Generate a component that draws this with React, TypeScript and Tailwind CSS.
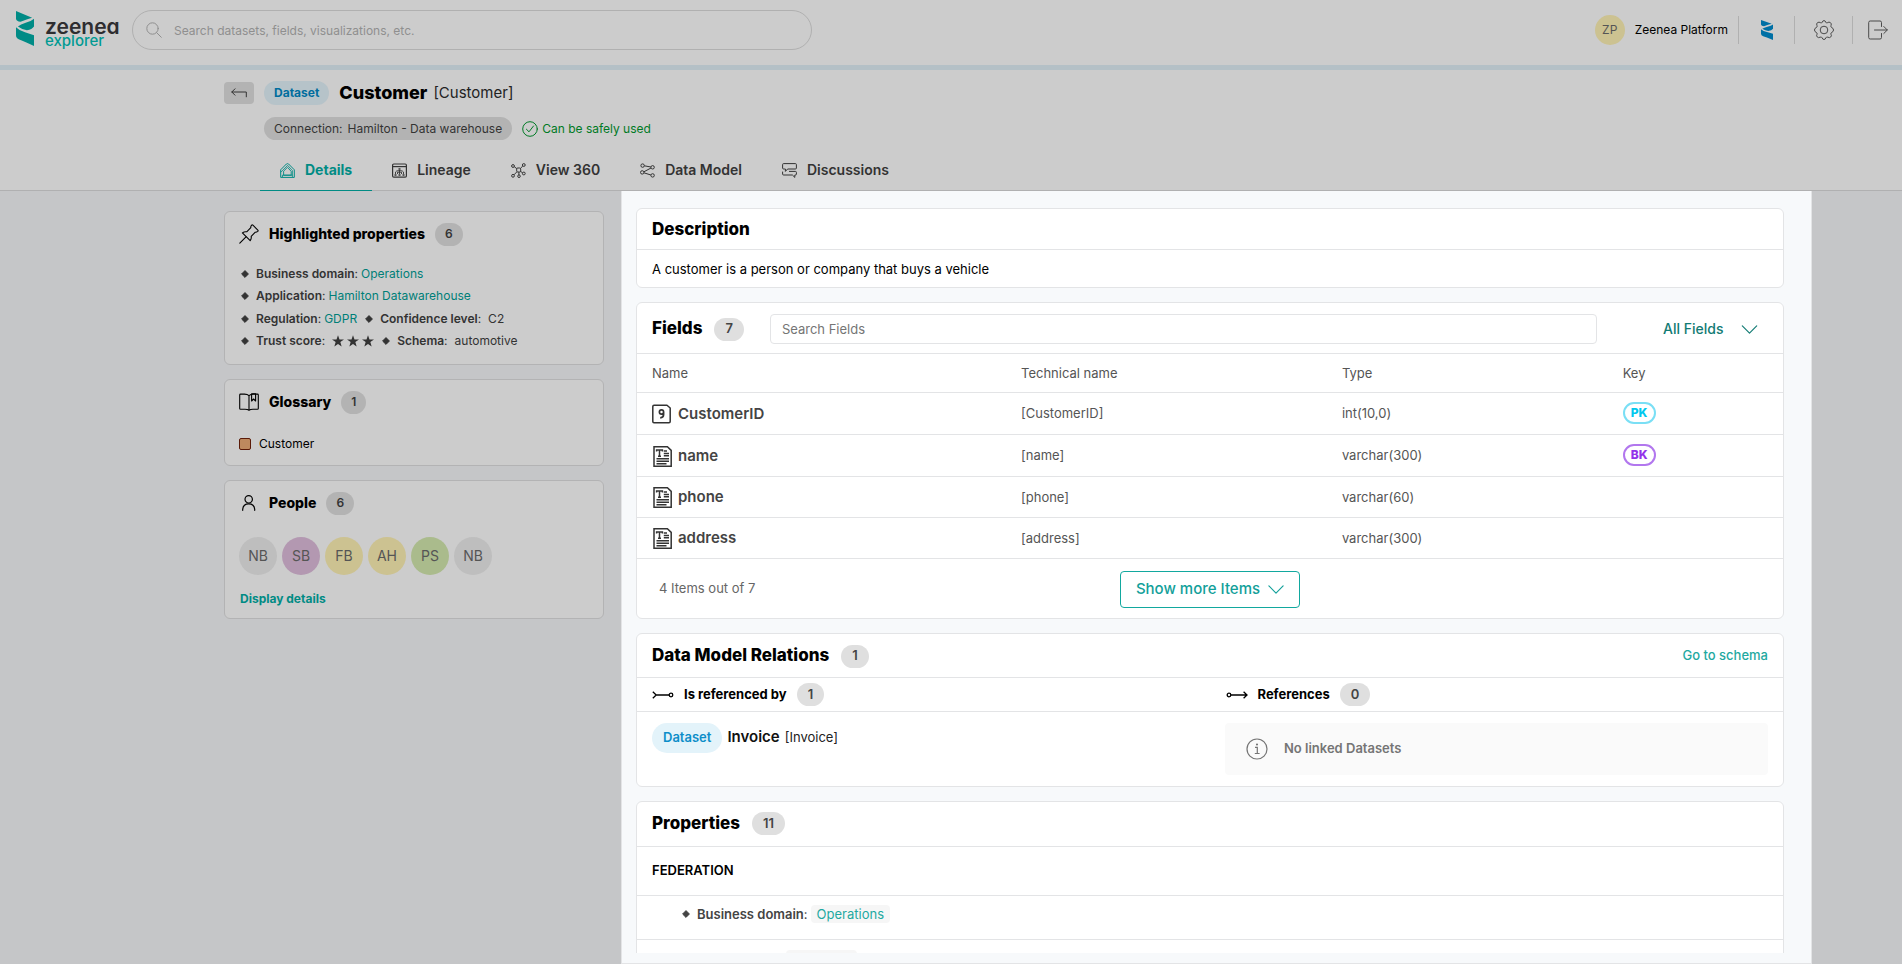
import type { ReactNode } from "react";

type Tone = "dim" | "light";

const tabs = [
    { label: "Details", icon: <HomeIcon />, active: true },
    { label: "Lineage", icon: <LineageIcon /> },
    { label: "View 360", icon: <GraphIcon /> },
    { label: "Data Model", icon: <ModelIcon /> },
    { label: "Discussions", icon: <DiscussionIcon /> },
];

const people = [
    { initials: "NB", color: "bg-[#bebebe]" },
    { initials: "SB", color: "bg-[#b398b1]" },
    { initials: "FB", color: "bg-[#ccc291]" },
    { initials: "AH", color: "bg-[#ccc291]" },
    { initials: "PS", color: "bg-[#aabb8c]" },
    { initials: "NB", color: "bg-[#bebebe]" },
];

const fields = [
    { name: "CustomerID", type: "int(10,0)", key: "PK", icon: <NumberIcon /> },
    { name: "name", type: "varchar(300)", key: "BK", icon: <TextIcon /> },
    { name: "phone", type: "varchar(60)", key: "", icon: <TextIcon /> },
    { name: "address", type: "varchar(300)", key: "", icon: <TextIcon /> },
];

function ZeeneaMark({ className }: { className: string }) {
    return (
        <svg viewBox="0 0 56 104" preserveAspectRatio="none" fill="currentColor" className={className} aria-hidden="true">
            <path d="M0 0 L50 20 Q34 25 14 32 Q1 31 0 23 Z" />
            <path d="M56 23 V46 Q50 55 34 57 Q20 56 6 46 Q14 40 30 35 Q48 30 56 23 Z" />
            <path d="M0 48 Q10 58 28 63 L56 72 V104 Q28 92 10 85 Q0 81 0 72 Z" />
        </svg>
    );
}

function SearchIcon() {
    return (
        <svg viewBox="0 0 16 16" fill="none" stroke="currentColor" strokeLinecap="round" className="size-4" aria-hidden="true">
            <circle cx="6.5" cy="6.5" r="5.7" />
            <path d="M10.6 10.6 L15.3 15.3" />
        </svg>
    );
}

function GearIcon() {
    return (
        <svg viewBox="0 0 20 20" fill="none" stroke="currentColor" strokeLinejoin="round" className="size-5" aria-hidden="true">
            <circle cx="10" cy="10" r="3.8" />
            <path d="M8.3 2.2 Q8.6 .6 10 .6 Q11.4 .6 11.7 2.2 Q12.1 3.2 13.2 2.8 Q15.1 1.5 16.4 2.6 Q17.9 3.7 17 5.6 Q16.4 7.1 17.8 7.6 Q19.5 8.2 19.5 10 Q19.5 11.7 17.8 12.4 Q16.4 12.9 17 14.3 Q17.9 16 16.8 16.9 Q15.6 18.2 13.9 17.2 Q12.4 16.5 11.9 17.8 Q11.4 19.5 10 19.5 Q8.6 19.5 8.1 17.8 Q7.6 16.5 6.1 17.2 Q4.4 18.2 3.2 16.9 Q2.1 16 3 14.3 Q3.6 12.9 2.2 12.4 Q.5 11.7 .5 10 Q.5 8.2 2.2 7.6 Q3.6 7.1 3 5.6 Q2.1 3.7 3.4 2.7 Q4.9 1.5 6.8 2.8 Q7.9 3.2 8.3 2.2 Z" />
        </svg>
    );
}

function LogoutIcon() {
    return (
        <svg viewBox="0 0 20 20" fill="none" stroke="currentColor" strokeLinejoin="round" strokeLinecap="round" className="size-5" aria-hidden="true">
            <path d="M13.5 6.5 V2.5 Q13.5 1 12 1 H2.2 Q.7 1 .7 2.5 V17.5 Q.7 19 2.2 19 H12 Q13.5 19 13.5 17.5 V13.5" />
            <path d="M6.5 10 H19.3 M15.8 6.5 L19.3 10 L15.8 13.5" />
        </svg>
    );
}

function BackIcon() {
    return (
        <svg viewBox="0 0 16 10" fill="none" stroke="currentColor" strokeLinejoin="round" strokeLinecap="round" className="h-2.5 w-4" aria-hidden="true">
            <path d="M4 .8 L.8 4 L4 7.2 M.8 4 H15.3 V8.8" />
        </svg>
    );
}

function CheckIcon() {
    return (
        <svg viewBox="0 0 16 16" fill="none" stroke="currentColor" strokeLinecap="round" className="size-4" aria-hidden="true">
            <circle cx="8" cy="8" r="7.3" />
            <path d="M4.4 8.2 L7 10.8 L11.5 5" />
        </svg>
    );
}

function HomeIcon() {
    return (
        <svg viewBox="0 0 15 15" fill="none" stroke="currentColor" strokeLinejoin="round" className="size-[15px]" aria-hidden="true">
            <path d="M.7 14.4 V6.8 L6.4 1 Q7.5 .2 8.6 1 L14.3 6.8 V14.4 Z" />
            <path d="M.9 9.2 L7.6 2.4 L12.4 7.6 V14" strokeWidth=".8" />
            <path d="M3.6 12.2 V8.2 L7.5 4.3 L11.2 8.4 V12.2 Z M2.4 14 V12.2 H12.4" strokeWidth=".9" />
        </svg>
    );
}

function LineageIcon() {
    return (
        <svg viewBox="0 0 15 15" fill="none" stroke="currentColor" className="size-[15px]" aria-hidden="true">
            <rect x=".6" y="1" width="13.8" height="13.2" rx="1.2" strokeWidth="1.2" />
            <path d="M.6 3.6 H14.4" strokeWidth="1.2" />
            <path d="M7.5 7 V11 M3.5 11 V9 Q4 7.6 7.5 7.6 Q11 7.6 11.5 9 V11 M5.5 11 V9.2 H9.5 V11" strokeWidth=".9" />
            <path d="M2.5 12 h2 M6.5 12 h2 M10.5 12 h2 M6.5 6 h2" strokeWidth="1.5" />
        </svg>
    );
}

function GraphIcon() {
    return (
        <svg viewBox="0 0 15 15" fill="none" stroke="currentColor" className="size-[15px]" aria-hidden="true">
            <rect x="5.7" y="5" width="4" height="4" rx="1" />
            <circle cx="2" cy="3" r="1.4" />
            <circle cx="12.8" cy="2" r="1.4" />
            <circle cx="2" cy="12.8" r="1.4" />
            <circle cx="8" cy="13.2" r="1.3" />
            <circle cx="12.8" cy="10.5" r="1.4" />
            <path d="M3.3 3.8 L5.8 5.6 M9.6 5.2 L11.8 3 M5.9 8.8 L3 11.8 M7.9 9 V12 M9.6 8.4 L11.6 9.8" />
        </svg>
    );
}

function ModelIcon() {
    return (
        <svg viewBox="0 0 15 15" fill="none" stroke="currentColor" className="size-[15px]" aria-hidden="true">
            <circle cx="2.6" cy="2.6" r="1.7" />
            <circle cx="12.6" cy="4.3" r="1.7" />
            <circle cx="2.2" cy="9.4" r="1.7" />
            <circle cx="12.6" cy="12.4" r="1.7" />
            <path d="M4.3 2.8 L10.9 4 M11 5 L3.9 8.8 M3.9 9.8 L10.9 12" />
        </svg>
    );
}

function DiscussionIcon() {
    return (
        <svg viewBox="0 0 15 15" fill="none" stroke="currentColor" strokeLinejoin="round" className="size-[15px]" aria-hidden="true">
            <path d="M2.4 6 H1.6 Q.6 6 .6 5 V1.6 Q.6 .6 1.6 .6 H13.4 Q14.4 .6 14.4 1.6 V5 Q14.4 6 13.4 6 H5.6 L3.4 8.4 V6 H2.4" />
            <path d="M7 8.4 H13.4 Q14.4 8.4 14.4 9.4 V11 Q14.4 12 13.4 12 H12.8 V14.4 L10.4 12 H1.6 Q.6 12 .6 11 V8.6" />
        </svg>
    );
}

function PinIcon() {
    return (
        <svg viewBox="0 0 20 20" fill="none" stroke="currentColor" strokeWidth="1.1" strokeLinejoin="round" strokeLinecap="round" className="size-5" aria-hidden="true">
            <path d="M12.6 1.2 Q13.2 .5 13.9 1.2 L18.8 6.1 Q19.5 6.8 18.8 7.4 Q17.8 8.2 16.3 8.2 L12.2 12.4 Q12.6 14.8 11.2 16.7 L3.4 8.9 Q5.4 7.4 7.7 7.8 L11.8 3.7 Q11.6 2.3 12.6 1.2 Z" />
            <path d="M7 12.8 L.8 19.2" />
        </svg>
    );
}

function BookIcon() {
    return (
        <svg viewBox="0 0 20 18" fill="none" stroke="currentColor" strokeWidth="1.1" strokeLinejoin="round" className="h-[18px] w-5" aria-hidden="true">
            <path d="M10 2.6 Q8.4 1.1 5.5 1.1 H1.6 Q.7 1.1 .7 2 V15.4 Q.7 16.2 1.6 16.2 H6 Q8.6 16.2 10 17.2 Q11.4 16.2 14 16.2 H18.4 Q19.3 16.2 19.3 15.4 V2 Q19.3 1.1 18.4 1.1 H14.5 Q11.6 1.1 10 2.6 Z M10 2.6 V17.2" />
            <path d="M12.6 .8 V8 L14.6 6 L16.6 8 V.8 Z" />
        </svg>
    );
}

function PersonIcon() {
    return (
        <svg viewBox="0 0 20 20" fill="none" stroke="currentColor" strokeWidth="1.2" strokeLinecap="round" className="size-5" aria-hidden="true">
            <circle cx="9.7" cy="6.3" r="3.7" />
            <path d="M3.7 17.3 V16.2 Q4.2 10.9 9.7 10.9 Q15.2 10.9 15.7 16.2 V17.3" />
        </svg>
    );
}

function StarIcon() {
    return (
        <svg viewBox="0 0 24 24" fill="currentColor" className="size-3" aria-hidden="true">
            <path d="M12 .5 L15 9 H24 L16.7 14.2 L19.3 23.2 L12 17.8 L4.7 23.2 L7.3 14.2 L0 9 H9 Z" />
        </svg>
    );
}

function NumberIcon() {
    return (
        <svg viewBox="0 0 20 20" fill="none" stroke="currentColor" strokeLinejoin="round" className="size-5 text-[#333]" aria-hidden="true">
            <path d="M2 1.2 H15 L18.2 4 V17.6 Q18.2 18.8 17 18.8 H2 Q.8 18.8 .8 17.6 V2.4 Q.8 1.2 2 1.2 Z" strokeWidth="1.5" />
            <path d="M11.6 8 A2.1 2.1 0 1 1 7.4 8 A2.1 2.1 0 1 1 11.6 8 V10.5 Q11.6 13.6 8.2 13.8" strokeWidth="1.7" />
        </svg>
    );
}

function TextIcon() {
    return (
        <svg viewBox="0 0 20 21" fill="none" stroke="currentColor" className="h-[21px] w-5 text-[#333]" aria-hidden="true">
            <path d="M2 .8 H15.4 L19.2 4.4 V20.2 H2 Z" strokeWidth="1.5" />
            <path d="M4.6 5.4 V4 H10.4 V5.4 M7.5 4 V10 M6 10.2 H9" strokeWidth="1.5" />
            <path d="M11.8 5 H15 M11.8 7.4 H17 M11.8 9.8 H17 M4.5 12.8 H17 M4.5 15.3 H17 M4.5 17.8 H14.5" strokeWidth="1.5" />
        </svg>
    );
}

function ChevronIcon({ className }: { className: string }) {
    return (
        <svg viewBox="0 0 18 10" fill="none" stroke="currentColor" strokeWidth="1.3" strokeLinecap="round" strokeLinejoin="round" className={className} aria-hidden="true">
            <path d="M1 1 L9 9 L17 1" />
        </svg>
    );
}

function IncomingIcon() {
    return (
        <svg viewBox="0 0 22 8" fill="none" stroke="currentColor" strokeWidth="1.3" className="h-2 w-[22px]" aria-hidden="true">
            <path d="M.8 .8 L4.2 4 L.8 7.2 M4.2 4 H17" />
            <circle cx="19" cy="4" r="1.8" />
        </svg>
    );
}

function OutgoingIcon() {
    return (
        <svg viewBox="0 0 22 8" fill="none" stroke="currentColor" strokeWidth="1.3" className="h-2 w-[22px]" aria-hidden="true">
            <circle cx="3" cy="4" r="1.8" />
            <path d="M5 4 H21 M17.6 .8 L21 4 L17.6 7.2" />
        </svg>
    );
}

function InfoIcon() {
    return (
        <svg viewBox="0 0 22 22" fill="none" stroke="currentColor" strokeWidth="1.2" className="size-[22px]" aria-hidden="true">
            <circle cx="11" cy="11" r="10" />
            <path d="M9 9.4 H11.3 V15.4 M8.8 15.5 H13.6" />
            <circle cx="11" cy="6.5" r=".5" />
        </svg>
    );
}

function Diamond() {
    return (
        <svg viewBox="0 0 8 8" fill="currentColor" stroke="currentColor" strokeLinejoin="round" className="size-2 shrink-0" aria-hidden="true">
            <path d="M4 .6 L7.4 4 L4 7.4 L.6 4 Z" />
        </svg>
    );
}

function Badge({ tone, children }: { tone: Tone; children: ReactNode }) {
    return (
        <span
            className={
                tone === "dim"
                    ? "flex h-[23px] items-center rounded-full bg-[#b3b3b3] px-2.5 text-xs font-semibold text-[#333]"
                    : "flex h-[23px] items-center rounded-full bg-[#dfdfdf] px-[11px] text-[13px] font-semibold text-[#444]"
            }
        >
            {children}
        </span>
    );
}

function SideCard({ title, count, icon, children }: { title: string; count: number; icon: ReactNode; children: ReactNode }) {
    return (
        <section className="rounded-md border border-[#b3b3b4] bg-[#ccc] px-3.5 pt-2.5">
            <div className="flex h-6 items-center">
                <span className="mr-2.5 flex w-5 justify-center text-black">{icon}</span>
                <h2 className="mr-2.5 text-sm font-extrabold text-black">{title}</h2>
                <Badge tone="dim">{count}</Badge>
            </div>
            {children}
        </section>
    );
}

function MainCard({ children }: { children: ReactNode }) {
    return <section className="shrink-0 rounded-md border border-[#e3e4e6] bg-white">{children}</section>;
}

function Property({ label, children }: { label: string; children: ReactNode }) {
    return (
        <span className="flex items-center">
            <Diamond />
            <span className="ml-[7px] mr-[3px]">
                <b className="font-semibold">{label}</b>:
            </span>
            {children}
        </span>
    );
}

function TopBar() {
    return (
        <header className="flex h-[70px] shrink-0 items-center border-b-[5px] border-[#b4c0c6] pr-3.5 pl-4">
            <a href="#" className="mb-[9px] flex w-[116px] items-center gap-[11px]">
                <ZeeneaMark className="h-[35px] w-[18px] text-[#008b86]" />
                <span className="flex flex-col pt-3 [font-feature-settings:'cv11']">
                    <span className="text-[21px] leading-[14px] font-semibold text-[#2e2d30]">zeenea</span>
                    <span className="text-[15px] leading-[14px] font-medium text-[#009a93]">explorer</span>
                </span>
            </a>
            <label className="mb-[5px] flex h-10 w-[680px] items-center gap-3 rounded-full border border-[#b0b0b0] px-[13px] text-[#8f8f8f]">
                <SearchIcon />
                <input
                    type="search"
                    aria-label="Search"
                    placeholder="Search datasets, fields, visualizations, etc."
                    className="flex-1 bg-transparent pt-0.5 text-xs outline-none placeholder:text-[#8f8f8f]"
                />
            </label>
            <div className="mb-[5px] ml-auto flex items-center text-[#4a4a4a]">
                <span className="mr-2.5 flex size-[30px] items-center justify-center rounded-full bg-[#ccc291] text-xs text-[#555]">ZP</span>
                <span className="text-xs text-black">Zeenea Platform</span>
                <span className="mx-2.5 h-7 w-px bg-[#b0b0b0]" />
                <a href="#" aria-label="Zeenea" className="mr-[21px] ml-3">
                    <ZeeneaMark className="h-5 w-3 text-[#0070a5]" />
                </a>
                <span className="mr-[19px] h-7 w-px bg-[#b0b0b0]" />
                <button type="button" aria-label="Settings">
                    <GearIcon />
                </button>
                <span className="mr-[15px] ml-[18px] h-7 w-px bg-[#b0b0b0]" />
                <button type="button" aria-label="Log out">
                    <LogoutIcon />
                </button>
            </div>
        </header>
    );
}

function PageHeader() {
    return (
        <div className="h-[121px] shrink-0 border-b border-[#b0b0b1] pt-[11px] pl-[224px]">
            <div className="flex h-6 items-center">
                <button type="button" aria-label="Back" className="mr-2.5 flex h-[22px] w-[30px] items-center justify-center rounded bg-[#b3b3b3] text-[#333]">
                    <BackIcon />
                </button>
                <span className="mr-2.5 flex h-6 items-center rounded-full bg-[#b6c3c9] px-2.5 text-xs font-bold text-[#006d9e]">Dataset</span>
                <h1 className="mr-1.5 text-lg leading-6 font-extrabold text-black">Customer</h1>
                <span className="text-[15px] text-[#222]">[Customer]</span>
            </div>
            <div className="mt-3 flex h-[23px] items-center pl-10 text-xs">
                <span className="mr-2.5 flex h-[23px] items-center gap-[5px] rounded-full bg-[#b3b3b3] px-2.5 text-[#333]">
                    <span>Connection:</span>
                    <span>Hamilton - Data warehouse</span>
                </span>
                <span className="flex items-center gap-1 text-[#007a25]">
                    <CheckIcon />
                    Can be safely used
                </span>
            </div>
            <nav className="mt-2.5 flex h-[41px] pl-9 text-sm font-semibold text-[#333]">
                {tabs.map((tab) => (
                    <a
                        key={tab.label}
                        href="#"
                        className={
                            tab.active
                                ? "flex items-center gap-2.5 border-b border-[#008b84] px-5 font-bold text-[#008b84]"
                                : "flex items-center gap-2.5 border-b border-transparent px-5"
                        }
                    >
                        {tab.icon}
                        {tab.label}
                    </a>
                ))}
            </nav>
        </div>
    );
}

function Sidebar() {
    return (
        <aside className="flex w-[380px] shrink-0 flex-col gap-3.5 pt-5">
            <SideCard title="Highlighted properties" count={6} icon={<PinIcon />}>
                <div className="mt-[17px] mb-[13px] flex flex-col pl-0.5 text-xs leading-[22px] text-[#333]">
                    <Property label="Business domain">
                        <a href="#" className="text-[#007f78]">Operations</a>
                    </Property>
                    <Property label="Application">
                        <a href="#" className="text-[#007f78]">Hamilton Datawarehouse</a>
                    </Property>
                    <div className="flex gap-2 pt-px">
                        <Property label="Regulation">
                            <a href="#" className="text-[#007f78]">GDPR</a>
                        </Property>
                        <Property label="Confidence level">
                            <span className="ml-1">C2</span>
                        </Property>
                    </div>
                    <div className="-mb-px flex gap-2">
                        <Property label="Trust score">
                            <span className="flex gap-[3px] pl-1">
                                <StarIcon />
                                <StarIcon />
                                <StarIcon />
                            </span>
                        </Property>
                        <Property label="Schema">
                            <span className="ml-1">automotive</span>
                        </Property>
                    </div>
                </div>
            </SideCard>

            <SideCard title="Glossary" count={1} icon={<BookIcon />}>
                <a href="#" className="mt-[21px] mb-3 flex items-center gap-2 text-xs leading-[18px] text-black">
                    <span className="size-3 rounded-xs border border-[#5a1a08] bg-[#be895e]" />
                    Customer
                </a>
            </SideCard>

            <SideCard title="People" count={6} icon={<PersonIcon />}>
                <div className="mt-[22px] flex gap-[5px]">
                    {people.map((person, i) => (
                        <span key={i} className={`${person.color} flex size-[38px] items-center justify-center rounded-full text-sm text-[#555]`}>
                            {person.initials}
                        </span>
                    ))}
                </div>
                <a href="#" className="mt-4 mb-[11px] block pl-px text-xs leading-4 font-bold text-[#008b84]">Display details</a>
            </SideCard>
        </aside>
    );
}

function FieldsCard() {
    return (
        <MainCard>
            <div className="flex h-[51px] items-center border-b border-[#e3e4e6] pt-0.5 pr-[25px] pl-[15px]">
                <h2 className="mr-3 text-[17px] font-extrabold">Fields</h2>
                <Badge tone="light">7</Badge>
                <input
                    type="text"
                    aria-label="Search Fields"
                    placeholder="Search Fields"
                    className="mr-[66px] ml-[26px] h-[30px] flex-1 rounded border border-[#e3e4e6] px-[11px] text-[13px] outline-none placeholder:text-[#757575]"
                />
                <select aria-label="Field filter" className="appearance-none pr-[34px] text-sm font-medium text-[#127b74]">
                    <option>All Fields</option>
                </select>
                <ChevronIcon className="pointer-events-none -ml-[17px] h-[9px] w-[17px] text-[#127b74]" />
            </div>
            <table className="w-full table-fixed text-left text-[13px] text-[#555]">
                <thead>
                    <tr className="h-[38px] border-b border-[#e3e4e6]">
                        <th className="w-[32.2%] pt-0.5 pl-[15px] font-normal">Name</th>
                        <th className="w-[28%] pt-0.5 pl-[15px] font-normal">Technical name</th>
                        <th className="w-[24.5%] pt-0.5 pl-[15px] font-normal">Type</th>
                        <th className="pt-0.5 pl-[15px] font-normal">Key</th>
                    </tr>
                </thead>
                <tbody>
                    {fields.map((field) => (
                        <tr key={field.name} className={field.key ? "h-[42px] border-b border-[#e3e4e6]" : "h-[41px] border-b border-[#e3e4e6]"}>
                            <td className="pt-0.5 pl-[15px]">
                                <a href="#" className="flex items-center gap-1.5 text-[15px] font-semibold text-[#444]">
                                    {field.icon}
                                    {field.name}
                                </a>
                            </td>
                            <td className="pt-0.5 pl-[15px]">[{field.name}]</td>
                            <td className="pt-0.5 pl-[15px]">{field.type}</td>
                            <td className="pl-[15px]">
                                {field.key && (
                                    <span
                                        className={
                                            field.key === "PK"
                                                ? "flex h-[22px] w-[33px] items-center justify-center rounded-full border-2 border-[#7adff5] text-xs font-extrabold text-[#00c8ee]"
                                                : "flex h-[22px] w-[33px] items-center justify-center rounded-full border-2 border-[#b277ee] text-xs font-extrabold text-[#9333ea]"
                                        }
                                    >
                                        {field.key}
                                    </span>
                                )}
                            </td>
                        </tr>
                    ))}
                </tbody>
            </table>
            <div className="grid h-[59px] grid-cols-3 items-center px-[22px] pt-0.5">
                <span className="text-[13px] text-[#666]">4 Items out of 7</span>
                <button type="button" className="flex h-[37px] items-center gap-2 justify-self-center rounded border border-[#12a89f] px-[15px] text-[15px] font-medium text-[#12a09a]">
                    Show more Items
                    <ChevronIcon className="h-[9px] w-4" />
                </button>
            </div>
        </MainCard>
    );
}

function RelationsCard() {
    return (
        <MainCard>
            <div className="flex h-11 items-center border-b border-[#e3e4e6] px-[15px] pt-0.5">
                <h2 className="mr-3 text-[17px] font-extrabold">Data Model Relations</h2>
                <Badge tone="light">1</Badge>
                <a href="#" className="ml-auto text-[13px] font-medium text-[#1fa9a1]">Go to schema</a>
            </div>
            <div className="grid h-[34px] grid-cols-2 border-b border-[#e3e4e6] pl-[15px] text-[13px] font-bold">
                <div className="flex items-center pt-px">
                    <IncomingIcon />
                    <h3 className="mr-2.5 ml-2.5">Is referenced by</h3>
                    <Badge tone="light">1</Badge>
                </div>
                <div className="flex items-center pt-px pl-2">
                    <OutgoingIcon />
                    <h3 className="mr-2.5 ml-2.5">References</h3>
                    <Badge tone="light">0</Badge>
                </div>
            </div>
            <div className="grid grid-cols-2 items-start pt-[11px] pr-[15px] pb-[11px] pl-[15px]">
                <div className="flex items-center">
                    <span className="mr-[5px] flex h-[30px] items-center rounded-full bg-[#e3f3fa] px-[11px] text-[13px] font-semibold text-[#0d8ec9]">Dataset</span>
                    <a href="#" className="mr-[5px] text-[15px] font-semibold text-[#111]">Invoice</a>
                    <span className="text-[13px] text-[#222]">[Invoice]</span>
                </div>
                <p className="ml-[15px] flex h-[52px] items-center gap-4 rounded bg-[#fafafa] px-[21px] text-[13px] font-semibold text-[#757575]">
                    <InfoIcon />
                    No linked Datasets
                </p>
            </div>
        </MainCard>
    );
}

function PropertiesCard() {
    return (
        <MainCard>
            <div className="flex h-[45px] items-center border-b border-[#e3e4e6] px-[15px]">
                <h2 className="mr-3 text-[17px] font-extrabold">Properties</h2>
                <Badge tone="light">11</Badge>
            </div>
            <h3 className="flex h-[49px] items-center border-b border-[#e3e4e6] px-[15px] text-[13px] font-semibold">FEDERATION</h3>
            <div className="flex h-11 items-start border-b border-[#e3e4e6] pt-[9px] pl-[45px] text-[13px] text-[#444]">
                <Property label="Business domain">
                    <a href="#" className="flex h-[18px] items-center rounded bg-[#f6f6f6] px-1.5 text-[#1fa9a1]">Operations</a>
                </Property>
            </div>
            <div className="h-11 pt-2.5 pl-[149px]">
                <span className="block h-[18px] w-[71px] rounded bg-[#f6f6f6]" />
            </div>
        </MainCard>
    );
}

export default function App() {
    return (
        <div className="flex h-screen flex-col overflow-hidden border-b border-white bg-[#ccc] font-['Inter','Liberation_Sans',sans-serif]">
            <TopBar />
            <PageHeader />
            <div className="flex min-h-0 flex-1 bg-[#c5c6c8] pr-[90px] pl-[224px]">
                <Sidebar />
                <main className="ml-[17px] flex min-w-0 flex-1 flex-col border border-t-0 border-[#e3e4e6] bg-[#f7f9fb] pr-[27px] pb-2.5 pl-3.5 text-black">
                    <div className="flex min-h-0 flex-1 flex-col gap-3.5 overflow-hidden pt-[17px]">
                        <MainCard>
                            <h2 className="flex h-[41px] items-center border-b border-[#e3e4e6] px-[15px] pt-px text-[17px] font-extrabold">Description</h2>
                            <p className="px-[15px] pt-[9px] pb-2 text-[13px] leading-5">A customer is a person or company that buys a vehicle</p>
                        </MainCard>
                        <FieldsCard />
                        <RelationsCard />
                        <PropertiesCard />
                    </div>
                </main>
            </div>
        </div>
    );
}
